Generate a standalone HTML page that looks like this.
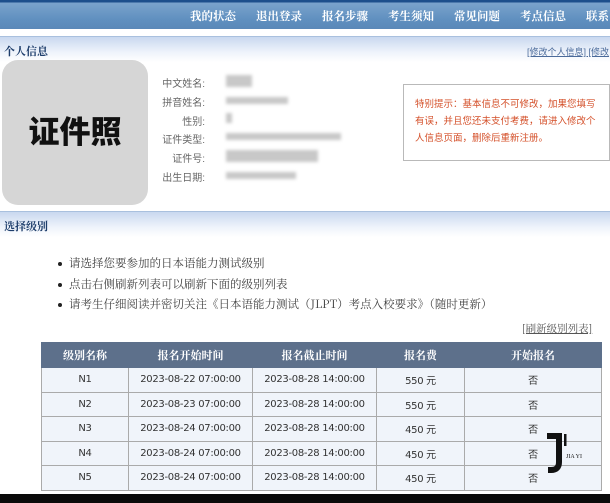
<!DOCTYPE html>
<html><head><meta charset="utf-8"><style>
*{margin:0;padding:0;box-sizing:border-box}
body{width:610px;height:503px;overflow:hidden;background:#fff;font-family:"Liberation Sans","Noto Sans CJK SC",sans-serif;position:relative}
.nav{position:absolute;left:0;top:0;width:610px;height:29px;background:linear-gradient(#1d4f8c 0,#1d4f8c 2px,#7aa3cc 3px,#5f8fbf 20px,#5a88b8 29px)}
.nav span{position:absolute;top:8px;color:#fff;font-size:11.5px;font-weight:bold;font-family:"Noto Serif CJK SC",serif}
.bar{position:absolute;left:0;width:610px;height:26px;background:linear-gradient(#c9d8ef,#eef3fb 60%,#fff);border-top:1px solid #a9c0de}
.bar b{position:absolute;left:4px;top:6px;font-size:11px;color:#1d3d6b;font-family:"Noto Serif CJK SC",serif}
.photo{position:absolute;left:2px;top:60px;width:146px;height:145px;background:#d6d6d6;border-radius:16px;font-size:31px;font-weight:900;text-align:center;line-height:140px;color:#111;font-family:"Noto Sans CJK SC",sans-serif}
.lbl{position:absolute;left:140px;width:65px;text-align:right;font-size:10px;color:#666}
.blur{position:absolute;height:7px;background:#c8c8c8;filter:blur(1.5px)}
.note{position:absolute;left:403px;top:84px;width:207px;height:77px;border:1px solid #b9b9b9;padding:11px 0 0 11px;font-size:9.5px;line-height:17px;color:#d4502a;white-space:nowrap}
ul{position:absolute;left:58px;top:255px;list-style:none}
li{font-size:11.5px;color:#444;height:20.5px;font-family:"Noto Serif CJK SC",serif}
li:before{content:"";display:inline-block;width:4px;height:4px;background:#222;border-radius:50%;margin-right:7px;vertical-align:middle}
table{position:absolute;left:41px;top:342px;width:561px;border-collapse:collapse;font-size:10.5px;color:#333;table-layout:fixed}
th{background:#5d708b;color:#fff;height:25px;font-weight:bold;font-family:"Noto Serif CJK SC",serif;border:1px solid #5d708b;font-size:11px}
td{height:24.5px;text-align:center;border:1px solid #aaa;background:#f0f4fa;font-family:"DejaVu Sans","Noto Sans CJK SC",sans-serif;font-size:10px;letter-spacing:-0.3px}
</style></head><body>
<div class="nav">
<span style="left:190px">我的状态</span><span style="left:256px">退出登录</span><span style="left:322px">报名步骤</span><span style="left:388px">考生须知</span><span style="left:454px">常见问题</span><span style="left:520px">考点信息</span><span style="left:586px">联系</span>
</div>
<div class="bar" style="top:36px"><b>个人信息</b><span style="position:absolute;left:527px;top:8px;font-size:9px;color:#4a6a9a;text-decoration:underline">[修改个人信息] [修改</span></div>
<div class="photo">证件照</div>
<div class="lbl" style="top:75px">中文姓名:</div>
<div class="lbl" style="top:94px">拼音姓名:</div>
<div class="lbl" style="top:113px">性别:</div>
<div class="lbl" style="top:131px">证件类型:</div>
<div class="lbl" style="top:150px">证件号:</div>
<div class="lbl" style="top:169px">出生日期:</div>
<div class="blur" style="left:226px;top:75px;width:26px;height:12px"></div>
<div class="blur" style="left:226px;top:97px;width:62px"></div>
<div class="blur" style="left:226px;top:113px;width:6px;height:10px"></div>
<div class="blur" style="left:226px;top:133px;width:115px"></div>
<div class="blur" style="left:226px;top:150px;width:92px;height:12px"></div>
<div class="blur" style="left:226px;top:172px;width:70px"></div>
<div class="note">特别提示：基本信息不可修改，加果您填写<br>有误，并且您还未支付考费，请进入修改个<br>人信息页面，删除后重新注册。</div>
<div class="bar" style="top:211px"><b>选择级别</b></div>
<ul><li>请选择您要参加的日本语能力测试级别</li><li>点击右侧刷新列表可以刷新下面的级别列表</li><li>请考生仔细阅读并密切关注《日本语能力测试（JLPT）考点入校要求》（随时更新）</li></ul>
<div style="position:absolute;left:522px;top:321px;font-size:10.5px;color:#555;text-decoration:underline;font-family:'Noto Serif CJK SC',serif">[刷新级别列表]</div>
<table>
<colgroup><col style="width:87px"><col style="width:124px"><col style="width:124px"><col style="width:88px"><col></colgroup>
<tr><th>级别名称</th><th>报名开始时间</th><th>报名截止时间</th><th>报名费</th><th>开始报名</th></tr>
<tr><td>N1</td><td>2023-08-22 07:00:00</td><td>2023-08-28 14:00:00</td><td>550 元</td><td>否</td></tr>
<tr><td>N2</td><td>2023-08-23 07:00:00</td><td>2023-08-28 14:00:00</td><td>550 元</td><td>否</td></tr>
<tr><td>N3</td><td>2023-08-24 07:00:00</td><td>2023-08-28 14:00:00</td><td>450 元</td><td>否</td></tr>
<tr><td>N4</td><td>2023-08-24 07:00:00</td><td>2023-08-28 14:00:00</td><td>450 元</td><td>否</td></tr>
<tr><td>N5</td><td>2023-08-24 07:00:00</td><td>2023-08-28 14:00:00</td><td>450 元</td><td>否</td></tr>
</table>
<svg style="position:absolute;left:545px;top:432px" width="60" height="42"><path d="M2 4H14V30Q14 38 6 38H3" fill="none" stroke="#111" stroke-width="6"/><rect x="19" y="2" width="2.5" height="12" fill="#111"/><text x="21" y="26" font-size="6" font-family="Liberation Serif" fill="#111">JIA YI</text></svg>
<div style="position:absolute;left:0;top:494px;width:610px;height:9px;background:#0a0a0a"></div>
</body></html>
